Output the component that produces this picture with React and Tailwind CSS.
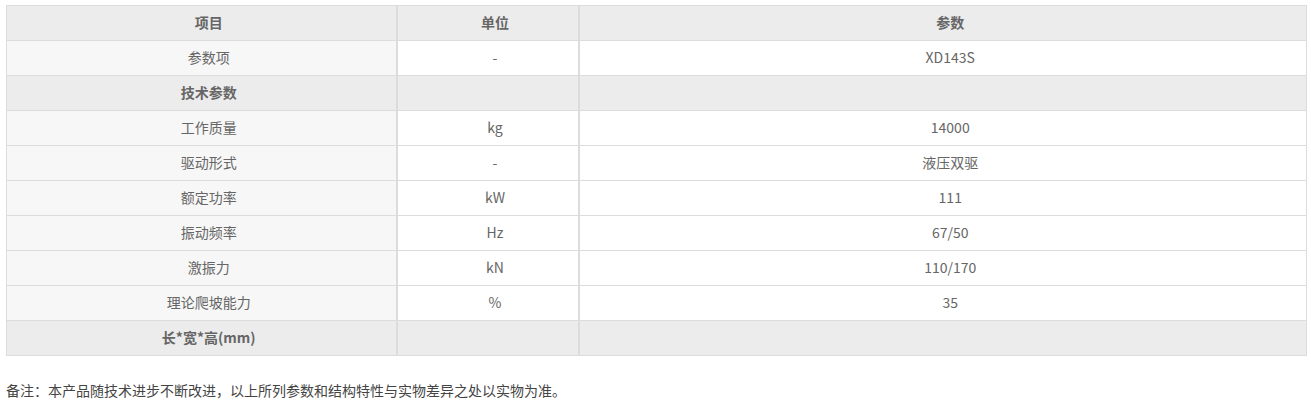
import React from "react";

const rows = [
  { name: "参数项", unit: "-", value: "XD143S" },
  { name: "技术参数", section: true },
  { name: "工作质量", unit: "kg", value: "14000" },
  { name: "驱动形式", unit: "-", value: "液压双驱" },
  { name: "额定功率", unit: "kW", value: "111" },
  { name: "振动频率", unit: "Hz", value: "67/50" },
  { name: "激振力", unit: "kN", value: "110/170" },
  { name: "理论爬坡能力", unit: "%", value: "35" },
  { name: "长*宽*高(mm)", section: true },
];

const cell = "border border-[#dcdcdc] pl-[15px] pb-[1px] text-center";

const App = () => {
  return (
    <div
      className="w-[1311px] h-[413px] bg-white pt-[5px] pl-[6px] text-[14px] text-[#666]"
      style={{ fontFamily: '"Microsoft YaHei", "Noto Sans CJK SC", sans-serif' }}
    >
      <table className="w-[1300px] table-fixed border-collapse">
        <colgroup>
          <col className="w-[390px]" />
          <col className="w-[182px]" />
          <col className="w-[728px]" />
        </colgroup>
        <thead>
          <tr className="h-[35px] bg-[#ececec]">
            <th className={`${cell} border-r-2 font-bold`}>项目</th>
            <th className={`${cell} border-r-2 font-bold`}>单位</th>
            <th className={`${cell} font-bold`}>参数</th>
          </tr>
        </thead>
        <tbody>
          {rows.map((r) =>
            r.section ? (
              <tr key={r.name} className="h-[35px] bg-[#ececec] font-bold">
                <td className={`${cell} border-r-2`}>{r.name}</td>
                <td className={`${cell} border-r-2`}></td>
                <td className={cell}></td>
              </tr>
            ) : (
              <tr key={r.name} className="h-[35px]">
                <td className={`${cell} border-r-2 bg-[#f7f7f7]`}>{r.name}</td>
                <td className={`${cell} border-r-2 bg-white`}>{r.unit}</td>
                <td className={`${cell} bg-white`}>{r.value}</td>
              </tr>
            )
          )}
        </tbody>
      </table>
      <p className="mt-[24px] text-[14px] text-[#444]">
        备注：本产品随技术进步不断改进，以上所列参数和结构特性与实物差异之处以实物为准。
      </p>
    </div>
  );
};

export default App;
